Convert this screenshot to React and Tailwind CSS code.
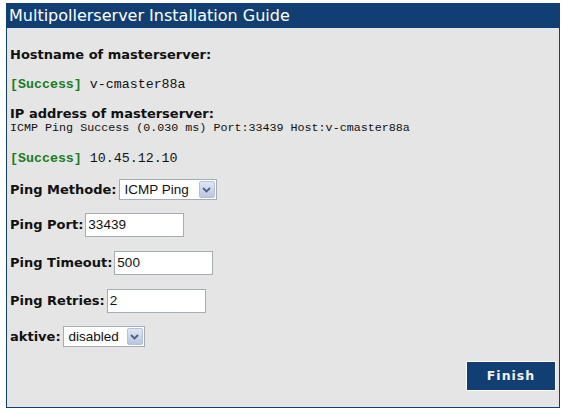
import React from 'react';

const verdana = { fontFamily: '"DejaVu Sans", Verdana, sans-serif' };

const Chevron = () => (
  <svg width="9" height="6" viewBox="0 0 9 6">
    <path d="M1 1 L4.5 4.5 L8 1" fill="none" stroke="#4d6185" strokeWidth="1.8" />
  </svg>
);

const FakeSelect = ({ value, width }) => (
  <div className={`flex items-center h-[21px] bg-white border border-[#a5acb2] ${width}`}>
    <span className="flex-1 pl-[5px] text-[13.5px] leading-none text-[#111] font-['Liberation_Sans',Arial,sans-serif]">{value}</span>
    <div className="w-[16px] h-[17px] mr-[1px] flex items-center justify-center bg-gradient-to-b from-[#dfe6f5] to-[#bac6e0] border border-[#b4c0dc] rounded-[2px]">
      <Chevron />
    </div>
  </div>
);

const Field = ({ label, value, mt }) => (
  <div className={`flex items-center ${mt}`}>
    <span className="text-[13px] font-bold text-[#111] mr-[2px]" style={verdana}>{label}</span>
    <div className="w-[99px] h-[24px] bg-white border border-[#a5acb2] flex items-center pl-[2px] text-[13.5px] text-[#111] font-['Liberation_Sans',Arial,sans-serif]">
      {value}
    </div>
  </div>
);

const App = () => {
  return (
    <div className="w-[565px] h-[415px] bg-white pt-[3px] pl-[6px]">
      <div className="w-[554px] h-[405px] border border-[#123f73] bg-[#e5e5e5] flex flex-col">
        <div className="h-[25px] bg-[#123f73] text-white text-[16px] leading-[25px] pl-[3px] -mt-px -mx-px" style={verdana}>
          Multipollerserver Installation Guide
        </div>
        <div className="px-[3px] flex-1 flex flex-col">
          <div className="mt-[19px] text-[13px] font-bold text-[#111] leading-[16px]" style={verdana}>
            Hostname of masterserver:
          </div>
          <div className="mt-[14px] text-[13.3px] leading-[16px] text-[#111] font-['Liberation_Mono','Courier_New',monospace]">
            <span className="font-bold text-[#1c7d1c]">[Success]</span> v-cmaster88a
          </div>
          <div className="mt-[13px] text-[13px] font-bold text-[#111] leading-[16px]" style={verdana}>
            IP address of masterserver:
          </div>
          <div className="text-[11.7px] leading-[13px] text-[#111] font-['Liberation_Mono','Courier_New',monospace]">
            ICMP Ping Success (0.030 ms) Port:33439 Host:v-cmaster88a
          </div>
          <div className="mt-[16px] text-[13.3px] leading-[16px] text-[#111] font-['Liberation_Mono','Courier_New',monospace]">
            <span className="font-bold text-[#1c7d1c]">[Success]</span> 10.45.12.10
          </div>
          <div className="flex items-center mt-[12px]">
            <span className="text-[13px] font-bold text-[#111] mr-[2px]" style={verdana}>Ping Methode:</span>
            <FakeSelect value="ICMP Ping" width="w-[98px]" />
          </div>
          <Field label="Ping Port:" value="33439" mt="mt-[13px]" />
          <Field label="Ping Timeout:" value="500" mt="mt-[14px]" />
          <Field label="Ping Retries:" value="2" mt="mt-[14px]" />
          <div className="flex items-center mt-[13px]">
            <span className="text-[13px] font-bold text-[#111] mr-[2px]" style={verdana}>aktive:</span>
            <FakeSelect value="disabled" width="w-[82px]" />
          </div>
          <div className="flex justify-end mt-[14px]">
            <button className="w-[90px] h-[30px] bg-[#123f73] border border-white text-[#f0f0f0] text-[12.5px] font-bold tracking-[1px]" style={verdana}>
              Finish
            </button>
          </div>
        </div>
      </div>
    </div>
  );
};

export default App;
